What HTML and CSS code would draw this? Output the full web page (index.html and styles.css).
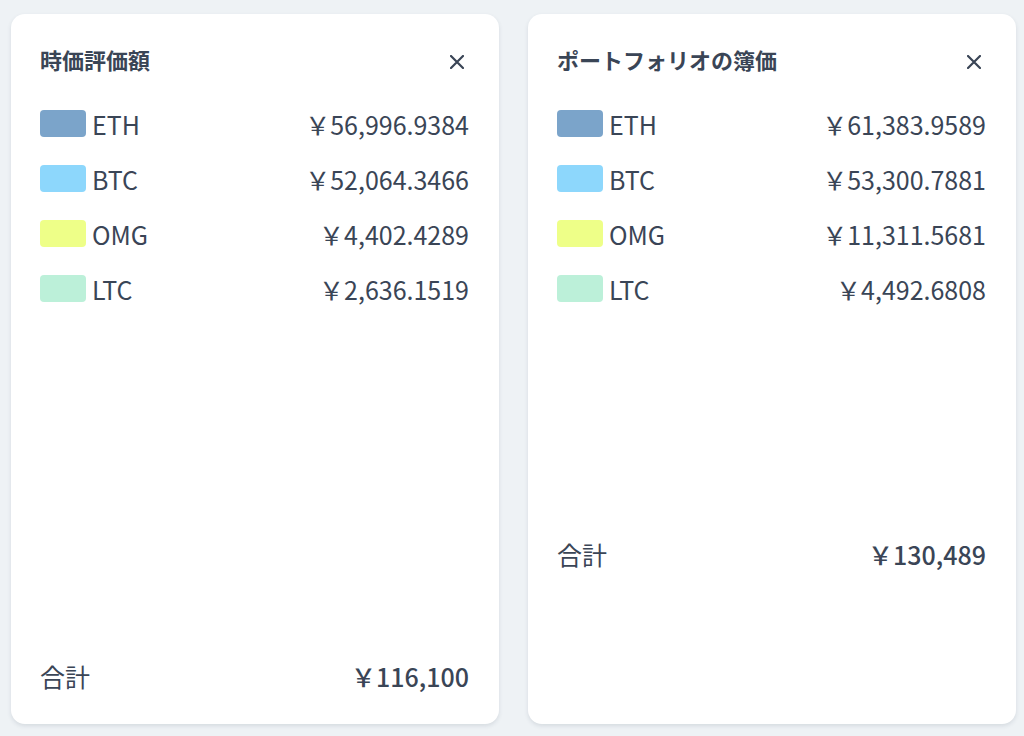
FILE: index.html
```html
<!DOCTYPE html>
<html lang="ja">
<head>
<meta charset="utf-8">
<title>Portfolio</title>
<link rel="stylesheet" href="styles.css">
</head>
<body>
<main class="board">
  <section class="card">
    <header class="card-head">
      <h2 class="card-title">時価評価額</h2>
      <button class="close" aria-label="close">
        <svg width="14" height="14" viewBox="0 0 14 14"><path d="M1 1L13 13M13 1L1 13" stroke="#3a4556" stroke-width="2.2" stroke-linecap="round"/></svg>
      </button>
    </header>
    <ul class="legend">
      <li class="row"><span class="sw eth"></span><span class="name">ETH</span><span class="val">￥56,996.9384</span></li>
      <li class="row"><span class="sw btc"></span><span class="name">BTC</span><span class="val">￥52,064.3466</span></li>
      <li class="row"><span class="sw omg"></span><span class="name">OMG</span><span class="val">￥4,402.4289</span></li>
      <li class="row"><span class="sw ltc"></span><span class="name">LTC</span><span class="val">￥2,636.1519</span></li>
    </ul>
    <div class="total total-bottom"><span class="total-label">合計</span><span class="total-val">￥116,100</span></div>
  </section>
  <section class="card">
    <header class="card-head">
      <h2 class="card-title">ポートフォリオの簿価</h2>
      <button class="close" aria-label="close">
        <svg width="14" height="14" viewBox="0 0 14 14"><path d="M1 1L13 13M13 1L1 13" stroke="#3a4556" stroke-width="2.2" stroke-linecap="round"/></svg>
      </button>
    </header>
    <ul class="legend">
      <li class="row"><span class="sw eth"></span><span class="name">ETH</span><span class="val">￥61,383.9589</span></li>
      <li class="row"><span class="sw btc"></span><span class="name">BTC</span><span class="val">￥53,300.7881</span></li>
      <li class="row"><span class="sw omg"></span><span class="name">OMG</span><span class="val">￥11,311.5681</span></li>
      <li class="row"><span class="sw ltc"></span><span class="name">LTC</span><span class="val">￥4,492.6808</span></li>
    </ul>
    <div class="total total-mid"><span class="total-label">合計</span><span class="total-val">￥130,489</span></div>
  </section>
</main>
</body>
</html>
```
FILE: styles.css
```css
* { box-sizing: border-box; }
html, body { margin: 0; padding: 0; }
body {
  background: #eef2f5;
  font-family: "Noto Sans CJK JP", "Noto Sans", sans-serif;
  color: #3a4556;
  width: 1024px;
  height: 736px;
  overflow: hidden;
}
.board {
  display: flex;
  gap: 29px;
  padding: 14px 8px 12px 11px;
  height: 736px;
}
.card {
  flex: 0 0 488px;
  background: #fff;
  border-radius: 14px;
  box-shadow: 0 2px 4px rgba(40, 60, 80, 0.12);
  padding: 30px 30px 30px 29px;
  display: flex;
  flex-direction: column;
}
.card-head {
  display: flex;
  align-items: center;
  justify-content: space-between;
  height: 30px;
}
.card-title {
  margin: 0;
  font-size: 22px;
  line-height: 30px;
  font-weight: 700;
  color: #3a4556;
}
.close {
  width: 24px;
  height: 24px;
  padding: 0;
  border: 0;
  background: none;
  display: flex;
  align-items: center;
  justify-content: center;
  margin-top: 6px;
}
.legend {
  list-style: none;
  margin: 22px 0 0;
  padding: 0;
}
.row {
  display: flex;
  align-items: center;
  height: 55px;
  font-size: 25px;
}
.sw {
  width: 46px;
  height: 27px;
  border-radius: 4px;
  margin-right: 6px;
  margin-top: -1px;
}
.eth { background: #7ba4ca; }
.btc { background: #8dd7fc; }
.omg { background: #eeff88; }
.ltc { background: #bcf0d9; }
.name { flex: 1; }
.val { text-align: right; }
.total {
  display: flex;
  justify-content: space-between;
  align-items: center;
  height: 36px;
  font-size: 25px;
}
.total-bottom { margin-top: auto; }
.total-mid { margin-top: 220px; }
.total-val { font-weight: 500; }
```
